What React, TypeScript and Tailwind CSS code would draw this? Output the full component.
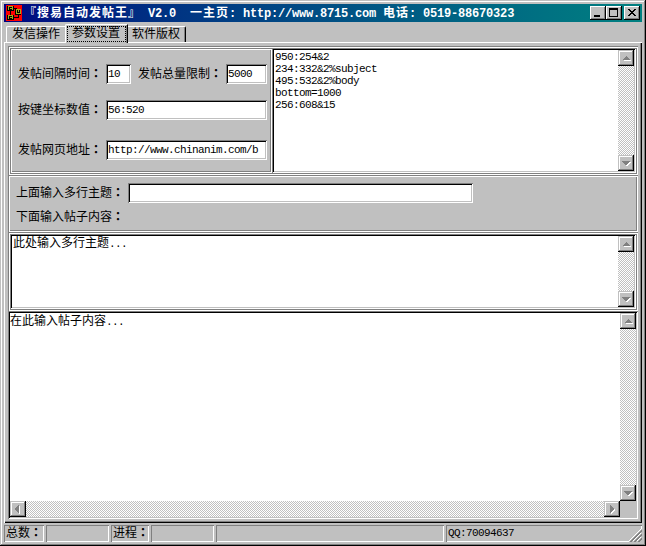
import { useState } from "react";
import type { ReactNode } from "react";
import clsx from "clsx";

// classic 3D edges
const sunken =
  "shadow-[inset_1px_1px_0_#808080,inset_-1px_-1px_0_#fff,inset_2px_2px_0_#000,inset_-2px_-2px_0_#c0c0c0]";
const groove =
  "shadow-[inset_1px_1px_0_#808080,inset_-1px_-1px_0_#fff,inset_2px_2px_0_#fff,inset_-2px_-2px_0_#808080]";
const raised =
  "shadow-[inset_-1px_-1px_0_#000,inset_1px_1px_0_#c0c0c0,inset_-2px_-2px_0_#808080,inset_2px_2px_0_#fff]";
const caption =
  "shadow-[inset_-1px_-1px_0_#000,inset_1px_1px_0_#fff,inset_-2px_-2px_0_#808080]";
const dither =
  "bg-[repeating-conic-gradient(#c0c0c0_0_25%,#fff_0_50%)] bg-[length:2px_2px]";

const latin = "font-['Liberation_Mono',monospace] text-[11px] tracking-[-0.6px]";

const arrows = {
  up: "M8 6h1v1h1v1h1v1h1v1H5V9h1V8h1V7h1z",
  down: "M4 6h8v1h-1v1h-1v1H9v1H7V9H6V8H5V7H4z",
  left: "M9 4v8H8v-1H7v-1H6V9H5V7h1V6h1V5h1V4z",
  right: "M6 4v8h1v-1h1v-1h1V9h1V7H9V6H8V5H7V4z",
};

function ScrollButton({ dir }: { dir: keyof typeof arrows }) {
  return (
    <button className={clsx("block size-4 shrink-0 bg-[#c0c0c0]", raised)}>
      <svg width="16" height="16" shapeRendering="crispEdges">
        <path d={arrows[dir]} fill="#fff" transform="translate(1 1)" />
        <path d={arrows[dir]} fill="#808080" />
      </svg>
    </button>
  );
}

function VScroll() {
  return (
    <div className={clsx("flex w-4 shrink-0 flex-col justify-between", dither)}>
      <ScrollButton dir="up" />
      <ScrollButton dir="down" />
    </div>
  );
}

function Memo({ className, children }: { className?: string; children: ReactNode }) {
  return (
    <div className={clsx("flex bg-white p-0.5", sunken, className)}>
      <div className="min-w-0 flex-1 px-px whitespace-pre">{children}</div>
      <VScroll />
    </div>
  );
}

// caption followed by a centred full-width colon
function Label({ text, className }: { text: string; className?: string }) {
  return (
    <span className={clsx("flex whitespace-nowrap", className)}>
      <span>{text}</span>
      <span className="-mr-1 font-['Noto_Sans_CJK_TC',sans-serif] font-bold">：</span>
    </span>
  );
}

function Field({ value, className }: { value: string; className: string }) {
  const [text, setText] = useState(value);
  return (
    <input
      value={text}
      onChange={(e) => setText(e.target.value)}
      className={clsx("h-5 bg-white px-0.5 pb-px outline-none", sunken, latin, className)}
    />
  );
}

function StatusCell({ className, children }: { className: string; children?: ReactNode }) {
  return (
    <div
      className={clsx(
        "h-[17px] pt-px pl-0.5 whitespace-nowrap shadow-[inset_1px_1px_0_#808080,inset_-1px_-1px_0_#fff]",
        className
      )}
    >
      {children}
    </div>
  );
}

function AppIcon() {
  return (
    <svg width="16" height="16" shapeRendering="crispEdges" className="shrink-0">
      <rect width="16" height="16" fill="#f00" />
      <path d="M1 1h7v5H1zM9 4h6v6H9zM1 10h7v5H1z" fill="#000" />
      <path d="M2 1h5v4H2zM10 4h5v5h-5zM2 10h5v4H2z" fill="#a8a818" />
      <path d="M3 2h3v1H4v1h2v1H3zM11 5h1v2h1V5h1v3h-3zM3 11h3v1H4v1h2v1H3z" fill="#000" />
      <path d="M4 6h1v4H4zM8 3h3v1H8zM8 12h4v-2h1v3H8z" fill="#000" />
    </svg>
  );
}

function TitleBar() {
  const seg = "font-['Liberation_Mono',monospace] tracking-[-0.2px]";
  return (
    <div className="flex h-[18px] items-center bg-linear-to-r from-[#000080] to-[#008080] pr-0.5 pl-0.5">
      <AppIcon />
      <div className="ml-0.5 flex-1 leading-[18px] font-bold tracking-[1px] whitespace-pre text-white">
        『搜易自动发帖王』<span className={seg}> V2.0{"  "}</span>一主页
        <span className={seg}>: http://www.8715.com </span>电话
        <span className={seg}>: 0519-88670323</span>
      </div>
      <div className="flex">
        <button className={clsx("h-3.5 w-4 bg-[#c0c0c0]", caption)}>
          <svg width="16" height="14" shapeRendering="crispEdges">
            <path d="M4 9h6v2H4z" />
          </svg>
        </button>
        <button className={clsx("h-3.5 w-4 bg-[#c0c0c0]", caption)}>
          <svg width="16" height="14" shapeRendering="crispEdges">
            <path d="M3 2h9v9H3zM4 4v6h7V4z" fillRule="evenodd" />
          </svg>
        </button>
        <button className={clsx("ml-0.5 h-3.5 w-4 bg-[#c0c0c0]", caption)}>
          <svg width="16" height="14" shapeRendering="crispEdges">
            <path d="M4 3h2v1h1v1h2V4h1V3h2v1h-1v1h-1v1H9v1h1v1h1v1h1v1h-2V9H9V8H7v1H6v1H4V9h1V8h1V7h1V6H6V5H5V4H4z" />
          </svg>
        </button>
      </div>
    </div>
  );
}

function Tabs() {
  return (
    <div className="flex h-5 items-end pl-0.5">
      <div className="h-4 w-[59px] rounded-tl-[2px] border-t border-l border-white pl-[5px] whitespace-nowrap">
        发信操作
      </div>
      <div className="relative z-10 -mb-px h-[19px] w-[63px] rounded-tl-[2px] border-t border-r border-l border-t-white border-r-black border-l-white bg-[#c0c0c0] px-px pt-px shadow-[inset_-1px_0_0_#808080]">
        <div className="h-4 w-[59px] border border-dotted border-black pl-1 whitespace-nowrap">
          <div className="-mt-px">参数设置</div>
        </div>
      </div>
      <div className="h-4 w-[58px] rounded-tr-[2px] border-t border-r border-t-white border-r-black pl-1 whitespace-nowrap shadow-[inset_-1px_0_0_#808080]">
        软件版权
      </div>
    </div>
  );
}

function App() {
  return (
    <div className="h-[546px] w-[646px] overflow-hidden bg-[#c0c0c0] p-1 font-['Noto_Sans_CJK_SC',sans-serif] text-[12px] leading-3 text-black shadow-[inset_-1px_-1px_0_#000,inset_1px_1px_0_#c0c0c0,inset_-2px_-2px_0_#808080,inset_2px_2px_0_#fff]">
      <TitleBar />
      <Tabs />

      {/* tab page */}
      <div className="h-[481px] px-1 pt-1 shadow-[inset_1px_1px_0_#fff,inset_-1px_-1px_0_#000,inset_-2px_-2px_0_#808080]">
        <div className={clsx("flex h-[129px] w-[630px] p-0.5", groove)}>
          <div className={clsx("w-[262px] pt-4 pl-2", groove)}>
            <div className="flex h-5 items-center">
              <Label text="发帖间隔时间" className="w-[88px] pb-0.5" />
              <Field value="10" className="w-[25px]" />
              <Label text="发帖总量限制" className="ml-[7px] w-[88px] pb-0.5" />
              <Field value="5000" className="w-[41px]" />
            </div>
            <div className="mt-4 flex h-5 items-center">
              <Label text="按键坐标数值" className="w-[88px] pb-0.5" />
              <Field value="56:520" className="w-[161px]" />
            </div>
            <div className="mt-5 flex h-5 items-center">
              <Label text="发帖网页地址" className="w-[88px] pb-0.5" />
              <Field value="http://www.chinanim.com/b" className="w-[161px]" />
            </div>
          </div>
          <Memo className="flex-1">
            <div className={clsx("pt-px", latin)}>
              {"950:254&2\n234:332&2%subject\n495:532&2%body\nbottom=1000\n256:608&15"}
            </div>
          </Memo>
        </div>

        <div className={clsx("h-[57px] w-[630px] pt-2 pl-2", groove)}>
          <div className="flex h-5 items-center">
            <Label text="上面输入多行主题" className="w-28 pb-0.5" />
            <Field value="" className="w-[345px]" />
          </div>
          <Label text="下面输入帖子内容" className="mt-[7px]" />
        </div>

        <div className={clsx("h-[79px] w-[630px] p-0.5", groove)}>
          <Memo className="h-[75px]">
            此处输入多行主题<span className={latin}>...</span>
          </Memo>
        </div>

        <div className={clsx("flex h-[208px] w-[630px] flex-col bg-white p-0.5", sunken)}>
          <div className="flex flex-1">
            <div className="flex-1 pt-px">
              在此输入帖子内容<span className={latin}>...</span>
            </div>
            <VScroll />
          </div>
          <div className="flex h-4 bg-[#c0c0c0]">
            <div className={clsx("flex flex-1 justify-between", dither)}>
              <ScrollButton dir="left" />
              <ScrollButton dir="right" />
            </div>
            <div className="w-4" />
          </div>
        </div>
      </div>

      {/* status bar */}
      <div className="flex gap-0.5 pt-0.5">
        <StatusCell className="w-10">
          <Label text="总数" />
        </StatusCell>
        <StatusCell className="w-[63px]" />
        <StatusCell className="w-[38px]">
          <Label text="进程" />
        </StatusCell>
        <StatusCell className="w-[63px]" />
        <StatusCell className="w-[228px]" />
        <StatusCell className="flex flex-1 justify-between">
          <span className={clsx("pt-px", latin)}>QQ:70094637</span>
          <svg width="13" height="13" className="mt-[3px] bg-[#c0c0c0]" shapeRendering="crispEdges">
            <path d="M0 12L12 0M4 12L12 4M8 12L12 8" stroke="#fff" />
            <path d="M1 13L13 1M2 13L13 2M5 13L13 5M6 13L13 6M9 13L13 9M10 13L13 10" stroke="#808080" />
          </svg>
        </StatusCell>
      </div>
    </div>
  );
}

export default App;
